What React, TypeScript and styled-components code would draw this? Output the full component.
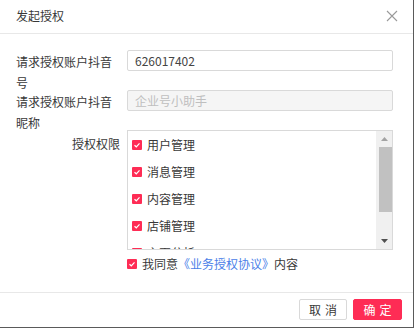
import React from "react";
import styled, { createGlobalStyle } from "styled-components";

const GlobalStyle = createGlobalStyle`
  html, body { margin: 0; padding: 0; background: #ffffff; }
  body { font-family: "Noto Sans CJK SC", "Noto Sans", "Liberation Sans", sans-serif; }
  * { box-sizing: border-box; }
`;

const Modal = styled.div`
  width: 414px;
  height: 328px;
  background: #ffffff;
  border-right: 1px solid #5a5a5a;
  border-bottom: 1px solid #5a5a5a;
  display: flex;
  flex-direction: column;
  color: #383838;
  font-size: 12px;
`;

const Header = styled.div`
  height: 34px;
  padding: 0 15px 2px 16px;
  border-bottom: 1px solid #e8e8e8;
  display: flex;
  align-items: center;
  justify-content: space-between;
`;

const Title = styled.div`
  font-size: 12px;
  color: #383838;
  line-height: 20px;
`;

const CloseButton = styled.button`
  border: none;
  background: transparent;
  padding: 0;
  width: 12px;
  height: 12px;
  display: flex;
  cursor: pointer;
`;

const Body = styled.div`
  flex: 1;
  padding: 16px 0 0 16px;
  display: flex;
  flex-direction: column;
`;

const FormRow = styled.div<{ $h?: number }>`
  display: grid;
  grid-template-columns: 104px 266px;
  column-gap: 7px;
  align-items: start;
  height: ${(p) => (p.$h ? `${p.$h}px` : "auto")};
`;

const Label = styled.div<{ $align?: "left" | "right"; $pt?: number }>`
  font-size: 12px;
  line-height: 21px;
  color: #383838;
  text-align: ${(p) => p.$align ?? "left"};
  padding-top: ${(p) => p.$pt ?? 1}px;
`;

const TextInput = styled.input`
  width: 266px;
  height: 21px;
  border: 1px solid #d9d9d9;
  border-radius: 2px;
  padding: 0 7px;
  font-family: inherit;
  font-size: 12px;
  color: #444444;
  background: #ffffff;
  outline: none;
  &:disabled {
    background: #f5f5f5;
    color: #bfbfbf;
  }
`;

const ListBox = styled.div`
  height: 120px;
  border: 1px solid #d9d9d9;
  display: flex;
  overflow: hidden;
`;

const ListContent = styled.div`
  flex: 1;
  padding-left: 4px;
  overflow: hidden;
`;

const ListItem = styled.label`
  height: 27px;
  display: flex;
  align-items: center;
  gap: 5px;
  font-size: 12px;
  color: #383838;
`;

const Box = styled.span`
  width: 10px;
  height: 10px;
  border-radius: 1px;
  background: #fe2c55;
  display: inline-flex;
  align-items: center;
  justify-content: center;
  flex: none;
`;

const ScrollTrack = styled.div`
  width: 16px;
  background: #f0f0f0;
  display: flex;
  flex-direction: column;
`;

const ScrollArrow = styled.div`
  height: 16px;
  display: flex;
  align-items: center;
  justify-content: center;
`;

const ScrollThumb = styled.div`
  height: 65px;
  margin: 0 0 0 3px;
  background: #c1c1c1;
`;

const ScrollSpacer = styled.div`
  flex: 1;
`;

const AgreeRow = styled.div`
  display: grid;
  grid-template-columns: 104px 266px;
  column-gap: 7px;
  margin-top: 3px;
`;

const AgreeText = styled.div`
  grid-column: 2;
  display: flex;
  align-items: center;
  gap: 5px;
  line-height: 21px;
  font-size: 12px;
  color: #383838;
`;

const Link = styled.a`
  color: #4a80e8;
  text-decoration: none;
`;

const Footer = styled.div`
  height: 35px;
  border-top: 1px solid #e8e8e8;
  padding: 6px 11px 0 0;
  display: flex;
  justify-content: flex-end;
  align-items: flex-start;
  gap: 6px;
`;

const Button = styled.button<{ $primary?: boolean }>`
  width: ${(p) => (p.$primary ? 49 : 48)}px;
  height: 21px;
  border-radius: 2px;
  border: 1px solid ${(p) => (p.$primary ? "#fe2c55" : "#d9d9d9")};
  background: ${(p) => (p.$primary ? "#fe2c55" : "#ffffff")};
  color: ${(p) => (p.$primary ? "#ffffff" : "#383838")};
  font-family: inherit;
  font-size: 12px;
  letter-spacing: 4px;
  padding: 0 0 0 4px;
  display: flex;
  align-items: center;
  justify-content: center;
  cursor: pointer;
`;

const Check = () => (
  <Box>
    <svg width="8" height="8" viewBox="0 0 8 8">
      <path d="M1.5 4.2 L3.3 5.8 L6.5 2.3" fill="none" stroke="#ffffff" strokeWidth="1.2" />
    </svg>
  </Box>
);

const perms = ["用户管理", "消息管理", "内容管理", "店铺管理", "主页分析"];

export default function App() {
  return (
    <>
      <GlobalStyle />
      <Modal>
        <Header>
          <Title>发起授权</Title>
          <CloseButton aria-label="close">
            <svg width="12" height="12" viewBox="0 0 12 12">
              <path d="M1 1 L11 11 M11 1 L1 11" stroke="#9a9a9a" strokeWidth="1.1" fill="none" />
            </svg>
          </CloseButton>
        </Header>
        <Body>
          <FormRow $h={40}>
            <Label>请求授权账户抖音号</Label>
            <TextInput defaultValue="626017402" />
          </FormRow>
          <FormRow $h={40}>
            <Label>请求授权账户抖音昵称</Label>
            <TextInput disabled defaultValue="企业号小助手" />
          </FormRow>
          <FormRow>
            <Label $align="right" $pt={3}>授权权限</Label>
            <ListBox>
              <ListContent>
                {perms.map((p) => (
                  <ListItem key={p}>
                    <Check />
                    {p}
                  </ListItem>
                ))}
              </ListContent>
              <ScrollTrack>
                <ScrollArrow>
                  <svg width="7" height="4" viewBox="0 0 7 4">
                    <path d="M0 4 L3.5 0 L7 4 Z" fill="#a3a3a3" />
                  </svg>
                </ScrollArrow>
                <ScrollThumb />
                <ScrollSpacer />
                <ScrollArrow>
                  <svg width="7" height="4" viewBox="0 0 7 4">
                    <path d="M0 0 L7 0 L3.5 4 Z" fill="#505050" />
                  </svg>
                </ScrollArrow>
              </ScrollTrack>
            </ListBox>
          </FormRow>
          <AgreeRow>
            <AgreeText>
              <Check />
              <span>
                我同意<Link href="#">《业务授权协议》</Link>内容
              </span>
            </AgreeText>
          </AgreeRow>
        </Body>
        <Footer>
          <Button>取消</Button>
          <Button $primary>确定</Button>
        </Footer>
      </Modal>
    </>
  );
}
